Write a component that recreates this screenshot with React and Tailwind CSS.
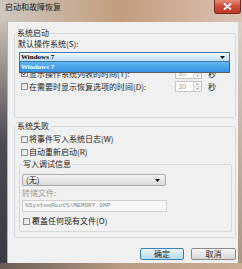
import React from 'react';

const Arrow = () => (
  <svg width="5" height="3" viewBox="0 0 5 3" className="shrink-0">
    <path d="M0 0h5L2.5 3z" fill="#111" />
  </svg>
);

const Check = ({ checked }) => (
  <span className="w-[7px] h-[7px] shrink-0 border border-[#8e8f8f] bg-linear-to-br from-[#d9d9d9] to-[#fbfbfb] flex items-center justify-center">
    {checked && (
      <svg width="5" height="5" viewBox="0 0 5 5">
        <path d="M0.4 2.4l1.4 1.6L4.6 0.6" fill="none" stroke="#2a2a2a" strokeWidth="1" />
      </svg>
    )}
  </span>
);

const Spinner = () => (
  <div className="flex h-[11px] w-[27px] border border-[#c6c6c6] bg-white">
    <div className="w-[17px] pl-[2px] text-[7px] leading-[9px] text-[#a0a0a0] font-['Liberation_Sans',sans-serif]">30</div>
    <div className="flex-1 flex flex-col border-l border-[#d4d4d4] bg-[#f3f3f3]">
      <div className="flex-1 flex items-center justify-center border-b border-[#dcdcdc]">
        <svg width="3" height="2" viewBox="0 0 3 2"><path d="M1.5 0L3 2H0z" fill="#b0b0b0" /></svg>
      </div>
      <div className="flex-1 flex items-center justify-center">
        <svg width="3" height="2" viewBox="0 0 3 2"><path d="M0 0h3L1.5 2z" fill="#b0b0b0" /></svg>
      </div>
    </div>
  </div>
);

const TimeRow = ({ label, checked }) => (
  <div className="flex items-center h-[11px]">
    <span className="ml-[6px]"><Check checked={checked} /></span>
    <span className="ml-[1px] w-[146px] whitespace-nowrap">{label}</span>
    <Spinner />
    <span className="ml-[6px]">秒</span>
  </div>
);

const CheckRow = ({ label, className }) => (
  <div className={`flex items-center h-[10px] ${className}`}>
    <Check />
    <span className="ml-[1px] whitespace-nowrap">{label}</span>
  </div>
);

export default function App() {
  return (
    <div className="w-[242px] h-[269px] overflow-hidden flex flex-col bg-[#8f7a68] text-[8px] leading-[10px] text-[#222] font-['Noto_Sans_CJK_SC',sans-serif]">
      {/* title bar */}
      <div className="h-[22px] shrink-0 flex items-start bg-linear-to-r from-[#cdc7bf] via-[#c29c7d] to-[#dbc3b5]">
        <span className="ml-[5px] mt-[2px] text-[#1c1c1c]">启动和故障恢复</span>
        <div className="ml-auto mr-[1px] w-[27px] h-[14px] rounded-b-[3px] border border-t-0 border-[#7a2a1e] bg-linear-to-b from-[#e48a78] via-[#cf4a36] to-[#c0392b] flex items-center justify-center">
          <svg width="9" height="7" viewBox="0 0 9 7">
            <path d="M1.5 1l6 5M7.5 1l-6 5" stroke="#fff" strokeWidth="1.8" strokeLinecap="round" />
          </svg>
        </div>
      </div>

      <div className="flex flex-1 min-h-0">
        <div className="w-[7px] shrink-0 bg-linear-to-b from-[#c9c0b5] via-[#4c4a52] to-[#3a3a44]" />

        {/* client area */}
        <div className="w-[231px] shrink-0 bg-[#f0f0f0] border-l border-[#b5b0aa] pt-[6px] pl-[6px] pr-[2px] flex flex-col">
          {/* 系统启动 */}
          <fieldset className="w-[222px] border border-[#d5d9dc] rounded-[2px] pb-[25px]">
            <legend className="ml-[1px] px-[1px] h-[10px]">系统启动</legend>
            <div className="ml-[3px] mt-[1px] h-[10px]">默认操作系统(S):</div>
            <div className="relative ml-[4px] mt-[3px] w-[211px] h-[10px] z-10">
              <div className="h-full flex items-center border border-[#3f7cab] bg-linear-to-b from-[#f4f9fd] to-[#b9dcf5] pl-[1px] pr-[4px]">
                <span className="font-['Liberation_Serif',serif] font-bold text-[7px] leading-[8px] text-black">Windows 7</span>
                <span className="ml-auto"><Arrow /></span>
              </div>
              <div className="absolute top-full left-0 w-full h-[11px] border border-t-0 border-[#5b5b5b] bg-white">
                <div className="h-full flex items-center pl-[1px] bg-linear-to-b from-[#5fb4f1] to-[#3791e2]">
                  <span className="font-['Liberation_Serif',serif] font-bold text-[7px] leading-[8px] text-white">Windows 7</span>
                </div>
              </div>
            </div>
            <div className="mt-[6px]">
              <TimeRow label="显示操作系统列表的时间(T):" checked />
            </div>
            <div className="mt-[2px]">
              <TimeRow label="在需要时显示恢复选项的时间(D):" />
            </div>
          </fieldset>

          {/* 系统失败 */}
          <fieldset className="mt-[3px] w-[222px] border border-[#d5d9dc] rounded-[2px] pb-[5px]">
            <legend className="ml-[1px] px-[1px] h-[10px]">系统失败</legend>
            <CheckRow className="mt-[3px] ml-[6px]" label="将事件写入系统日志(W)" />
            <CheckRow className="mt-[3px] ml-[6px]" label="自动重新启动(R)" />

            <fieldset className="mt-[2px] ml-[4px] w-[213px] border border-[#d5d9dc] rounded-[2px] pb-[5px]">
              <legend className="ml-[2px] px-[1px] h-[10px]">写入调试信息</legend>
              <div className="ml-[2px] mt-[5px] w-[144px] h-[12px] flex items-center border border-[#a9a9a9] rounded-[2px] bg-linear-to-b from-[#f4f4f4] to-[#dadada] pl-[3px] pr-[5px]">
                <span>(无)</span>
                <span className="ml-auto"><Arrow /></span>
              </div>
              <div className="ml-[2px] mt-[2px] h-[10px] text-[#9c9c9c]">转储文件:</div>
              <div className="ml-[2px] mt-[2px] w-[145px] h-[12px] flex items-center border border-[#cfcfcf] bg-[#f6f6f6] pl-[2px]">
                <span className="font-['Liberation_Mono',monospace] text-[6.2px] leading-[8px] text-[#8a8a8a]">%SystemRoot%\MEMORY.DMP</span>
              </div>
              <CheckRow className="mt-[4px] ml-[3px] gap-[1px]" label="覆盖任何现有文件(O)" />
            </fieldset>
          </fieldset>

          {/* buttons */}
          <div className="mt-[10px] flex justify-end gap-[7px] pr-[0px]">
            <button className="w-[44px] h-[12px] rounded-[2px] border border-[#3c7fb1] bg-linear-to-b from-[#eaf5fc] to-[#b3d8f1] text-[8px] leading-[10px] text-[#222]">确定</button>
            <button className="w-[45px] h-[12px] rounded-[2px] border border-[#8a8a8a] bg-linear-to-b from-[#f5f5f5] to-[#d6d6d6] text-[8px] leading-[10px] text-[#222]">取消</button>
          </div>
        </div>

        <div className="flex-1 bg-linear-to-b from-[#d8cfc6] to-[#a99585]" />
      </div>

      <div className="h-[6px] shrink-0 bg-linear-to-r from-[#6a5d55] via-[#b89c82] to-[#c9ad93]" />
    </div>
  );
}
